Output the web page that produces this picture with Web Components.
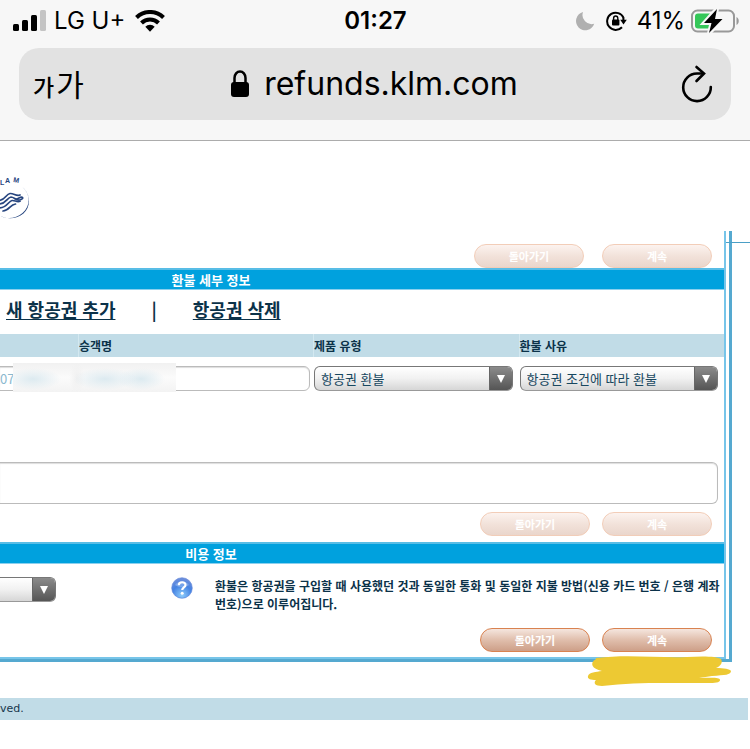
<!DOCTYPE html>
<html lang="ko">
<head>
<meta charset="utf-8">
<meta name="viewport" content="width=device-width, initial-scale=1">
<title>refunds.klm.com</title>
<style>
  body {
    margin: 0;
    background: #fff;
    color: #0b3249;
    font-family: "Noto Sans CJK KR", sans-serif;
    overflow-x: hidden;
  }
</style>
</head>
<body>
  <phone-status carrier="LG U+" time="01:27" battery="41%"></phone-status>
  <address-bar>refunds.klm.com</address-bar>
  <main>
    <site-header></site-header>
    <refund-frame>
      <button-row class="wide">
        <pill-button faded>돌아가기</pill-button>
        <pill-button faded>계속</pill-button>
      </button-row>
      <section-title>환불 세부 정보</section-title>
      <ticket-links></ticket-links>
      <ticket-table></ticket-table>
      <button-row class="middle">
        <pill-button faded>돌아가기</pill-button>
        <pill-button faded>계속</pill-button>
      </button-row>
      <section-title>비용 정보</section-title>
      <cost-info>환불은 항공권을 구입할 때 사용했던 것과 동일한 통화 및 동일한 지불 방법(신용 카드 번호 / 은행 계좌 번호)으로 이루어집니다.</cost-info>
      <button-row class="last">
        <pill-button>돌아가기</pill-button>
        <pill-button>계속</pill-button>
      </button-row>
      <marker-stroke slot="mark"></marker-stroke>
    </refund-frame>
    <site-footer>ved.</site-footer>
  </main>

<script>
class PhoneStatus extends HTMLElement {
  constructor() {
    super();
    this.attachShadow({ mode: 'open' });
  }

  connectedCallback() {
    this.shadowRoot.innerHTML = `
      <style>
        :host {
          display: grid;
          grid-template-columns: 1fr auto 1fr;
          align-items: center;
          height: 42px;
          padding: 0 11px 0 12px;
          background: #f7f7f7;
          color: #000;
          font: 24px/28px Inter, sans-serif;
        }
        div { display: flex; align-items: center; }
        .right { justify-content: flex-end; }
        .carrier { margin: 0 10px 0 8px; }
        .lock { margin: 0 10px 0 11px; }
        .battery { margin-left: 6px; }
        b { font-weight: 600; }
        svg { display: block; flex: none; }
      </style>
      <div>
        <svg width="34" height="22" viewBox="0 0 34 22">
          <rect x="1" y="14" width="6" height="7" rx="1.5"/>
          <rect x="10" y="10" width="6" height="11" rx="1.5"/>
          <rect x="19" y="5" width="6" height="16" rx="1.5"/>
          <rect x="28" width="6" height="21" rx="1.5" fill="#c4c4c4"/>
        </svg>
        <span class="carrier">${this.getAttribute('carrier')}</span>
        <svg width="30" height="22" viewBox="0 0 30 22">
          <g fill="none" stroke="#000" stroke-width="4">
            <path d="M1.5 7.5a19.2 19.2 0 0 1 27 0"/>
            <path d="M6.5 13a12 12 0 0 1 17 0"/>
          </g>
          <path d="M10.3 16.8a6.6 6.6 0 0 1 9.4 0L15 21.7z"/>
        </svg>
      </div>
      <b>${this.getAttribute('time')}</b>
      <div class="right">
        <svg width="20" height="20" viewBox="0 0 20 20">
          <path d="M8 1A9.3 9.3 0 1 0 19.2 12.8 9.2 9.2 0 0 1 8 1z" fill="#b0b0b0"/>
        </svg>
        <svg class="lock" width="21" height="20" viewBox="0 0 21 20">
          <path d="M17.600 6.800A8.600 8.600 0 1 0 16 16.200" fill="none" stroke="#000" stroke-width="2"/>
          <path d="M14.200 8.800h6.600l-3.300 4.600z"/>
          <path d="M17.400 6.500v3" stroke="#000" stroke-width="2"/>
          <rect x="6" y="8.600" width="7.400" height="6" rx="1"/>
          <path d="M7.600 9V7.200a2.100 2.200 0 0 1 4.200 0V9" fill="none" stroke="#000" stroke-width="1.400"/>
        </svg>
        <span>${this.getAttribute('battery')}</span>
        <svg class="battery" width="48" height="26" viewBox="0 0 48 26">
          <rect x="1" y="2.5" width="42" height="21" rx="5.5" fill="none" stroke="#999" stroke-width="2"/>
          <rect x="4" y="5.5" width="17" height="15" rx="3" fill="#35c759"/>
          <path d="M45.5 9c3 1.5 3 6.500 0 8z" fill="#999"/>
          <path d="M26 .5L13 15h7.500L18 25.500 31.500 11H24z" stroke="#f7f7f7" stroke-width="4"/>
          <path d="M26 1L13 15h7.500L18 25 31.500 11H24z"/>
        </svg>
      </div>
    `;
  }
}
customElements.define('phone-status', PhoneStatus);

class AddressBar extends HTMLElement {
  constructor() {
    super();
    this.attachShadow({ mode: 'open' }).innerHTML = `
      <style>
        :host {
          display: block;
          padding: 6px 19px 20px;
          background: #f7f7f7;
          border-bottom: 1px solid #acacac;
        }
        .field {
          display: grid;
          grid-template-columns: 1fr auto 1fr;
          align-items: center;
          height: 72px;
          padding: 0 16px 0 14px;
          border-radius: 20px;
          background: #e2e2e2;
        }
        button {
          padding: 0;
          border: 0;
          background: none;
          color: #000;
          font: inherit;
        }
        .size {
          display: flex;
          align-items: baseline;
          gap: 2px;
          justify-self: start;
          font-size: 30px;
          line-height: 40px;
        }
        small { font-size: 23px; font-weight: 500; }
        .host {
          display: flex;
          align-items: center;
          gap: 14px;
          font: 32px/40px Inter, sans-serif;
        }
        .reload { justify-self: end; }
        svg { display: block; }
      </style>
      <div class="field">
        <button class="size"><small>가</small><span>가</span></button>
        <button class="host">
          <svg width="20" height="28" viewBox="0 0 20 28">
            <rect x="1" y="12" width="18" height="15" rx="3"/>
            <path d="M4.500 13V8a5.500 6.500 0 0 1 11 0v5" fill="none" stroke="#000" stroke-width="2.500"/>
          </svg>
          <slot></slot>
        </button>
        <button class="reload" aria-label="새로 고침">
          <svg width="36" height="40" viewBox="0 0 36 40" fill="none" stroke="#000" stroke-width="2.600" stroke-linecap="round">
            <path d="M31.800 23A13.800 13.800 0 1 1 18 9.500H24"/>
            <path d="M17.500 3l7.500 6.500-7.500 7.500"/>
          </svg>
        </button>
      </div>
    `;
  }
}
customElements.define('address-bar', AddressBar);

class SiteHeader extends HTMLElement {
  constructor() {
    super();
    this.attachShadow({ mode: 'open' }).innerHTML = `
      <style>
        :host { display: block; height: 58px; padding-top: 32px; }
        svg { display: block; }
        text { font: bold 7px "Liberation Sans", sans-serif; fill: #27457f; }
      </style>
      <svg width="32" height="50" viewBox="0 0 32 50">
        <defs>
          <linearGradient id="ring" x1="0" y1="0" x2="1" y2="1">
            <stop offset="0" stop-color="#1e4c8f"/>
            <stop offset="1" stop-color="#28437b"/>
          </linearGradient>
        </defs>
        <text x="0" y="12">L</text>
        <text x="5" y="10">A</text>
        <text x="13" y="9" transform="rotate(10 13 9)">M</text>
        <path d="M22.500 14C31 21.500 30.500 33 22.500 40S5 45.500-2 42c9 5 19 4 25.500-1.500C31.500 33 30.500 21 22.500 14z" fill="url(#ring)"/>
        <g fill="none" stroke="#27457f" stroke-width="1.700" stroke-linecap="round">
          <path d="M-1 27.500c6 0 7-6.500 11-7 4-.3 6 3 10 1.500"/>
          <path d="M-1 31c7 0 8-6.500 12-7 3 0 5 3.500 8.500 3 3.500-.6 4-2.800 2-2.800-2.500 0-3 2.300-6.500 1.800"/>
          <path d="M0 34.800c7 0 8.500-6.800 12-7.300 3-.3 5 2 8 .7"/>
          <path d="M3 38c6 0 7-6.500 12.500-7"/>
        </g>
      </svg>
    `;
  }
}
customElements.define('site-header', SiteHeader);

class RefundFrame extends HTMLElement {
  constructor() {
    super();
    this.attachShadow({ mode: 'open' }).innerHTML = `
      <style>
        :host {
          display: block;
          position: relative;
          margin-right: 18px;
          padding-right: 3px;
          border-right: 3px solid #55a9d0;
          border-bottom: 3px solid #55a9d0;
        }
        .inner {
          border-right: 2px solid #77c5e9;
          border-bottom: 2px solid #77c5e9;
        }
        /* rule that runs on to the window's edge */
        .rule {
          position: absolute;
          top: 11px;
          left: calc(100% - 3px);
          width: 24px;
          border-top: 1px solid #4b9fc6;
        }
        ::slotted([slot="mark"]) {
          position: absolute;
          right: 0;
          top: 100%;
        }
      </style>
      <div class="inner"><slot></slot></div>
      <div class="rule"></div>
      <slot name="mark"></slot>
    `;
  }
}
customElements.define('refund-frame', RefundFrame);

class SectionTitle extends HTMLElement {
  constructor() {
    super();
    this.attachShadow({ mode: 'open' }).innerHTML = `
      <style>
        :host {
          display: block;
          padding-right: 302px;
          border-top: 2px solid #58bde6;
          border-bottom: 1px solid #8bd0ee;
          background: #00a1de;
          color: #fff;
          text-align: center;
        }
        h2 { margin: 0; font-size: 13px; line-height: 19px; }
      </style>
      <h2><slot></slot></h2>
    `;
  }
}
customElements.define('section-title', SectionTitle);

class ButtonRow extends HTMLElement {
  constructor() {
    super();
    this.attachShadow({ mode: 'open' }).innerHTML = `
      <style>
        :host {
          display: flex;
          justify-content: flex-end;
          gap: 12px;
          padding-right: 12px;
        }
        :host(.wide) { gap: 18px; padding-top: 13px; }
        :host(.middle) { padding-top: 8px; padding-bottom: 6px; }
        :host(.last) { padding-top: 15px; padding-bottom: 5px; }
      </style>
      <slot></slot>
    `;
  }
}
customElements.define('button-row', ButtonRow);

class PillButton extends HTMLElement {
  constructor() {
    super();
    this.attachShadow({ mode: 'open' }).innerHTML = `
      <style>
        :host { display: block; }
        button {
          display: block;
          width: 110px;
          height: 24px;
          padding: 0;
          border: 1px solid #d98250;
          border-radius: 12px;
          background: linear-gradient(#f5e6de, #e0beac 50%, #cd9f88);
          color: #fff;
          font: bold 11px/20px "Noto Sans CJK KR", sans-serif;
        }
        :host([faded]) button {
          border-color: #f2cdb8;
          background: linear-gradient(#fcf3ef, #f2e2da 50%, #ead6cc);
        }
      </style>
      <button><slot></slot></button>
    `;
  }
}
customElements.define('pill-button', PillButton);

class TicketLinks extends HTMLElement {
  constructor() {
    super();
    this.attachShadow({ mode: 'open' }).innerHTML = `
      <style>
        :host {
          display: flex;
          gap: 36px;
          padding: 7px 6px 13px;
          font-size: 18px;
          font-weight: bold;
          line-height: 24px;
        }
        a { color: #0b3249; text-underline-offset: 2px; text-decoration-thickness: 1px; }
      </style>
      <a href="#">새 항공권 추가</a>
      <span>|</span>
      <a href="#">항공권 삭제</a>
    `;
  }
}
customElements.define('ticket-links', TicketLinks);

class GlossySelect extends HTMLElement {
  constructor() {
    super();
    this.attachShadow({ mode: 'open' });
  }

  connectedCallback() {
    this.shadowRoot.innerHTML = `
      <style>
        :host { display: block; }
        label {
          display: grid;
          grid-template-columns: 1fr 23px;
          height: 25px;
          box-sizing: border-box;
          border: 1px solid #777;
          border-bottom-color: #999;
          border-radius: 6px;
          overflow: hidden;
          background: linear-gradient(#fff, #f1f1f1 50%, #d6d6d6);
        }
        select {
          grid-area: 1 / 1 / 2 / 3;
          appearance: none;
          border: 0;
          padding: 0 24px 0 6px;
          width: 100%;
          background: none;
          color: #17475f;
          font: 13px/22px "Noto Sans CJK KR", sans-serif;
        }
        span {
          grid-area: 1 / 2;
          display: grid;
          place-items: center;
          border-left: 1px solid #666;
          background: linear-gradient(#8b8b8b, #555);
          pointer-events: none;
        }
      </style>
      <label>
        <select aria-label="${this.getAttribute('label')}">
          <option>${this.getAttribute('value')}</option>
        </select>
        <span><svg width="8" height="8"><path d="M0 0h8L4 8z" fill="#fff"/></svg></span>
      </label>
    `;
  }
}
customElements.define('glossy-select', GlossySelect);

class TicketTable extends HTMLElement {
  constructor() {
    super();
    this.attachShadow({ mode: 'open' }).innerHTML = `
      <style>
        :host { display: block; position: relative; }
        table {
          width: 100%;
          table-layout: fixed;
          border-collapse: collapse;
        }
        col.number { width: 78px; }
        col.name { width: 235px; }
        th {
          height: 23px;
          padding: 0 1px;
          background: #c1dce7;
          font-size: 12px;
          line-height: 22px;
          text-align: left;
          box-shadow: inset 1px 0 #d3e8f0;
        }
        th:first-child { box-shadow: none; }
        td { padding: 9px 6px 71px 1px; }
        td:nth-child(-n+2) { padding-left: 0; padding-right: 3px; }
        input, textarea {
          display: block;
          box-sizing: border-box;
          width: 100%;
          border: 1px solid #bbb;
          border-radius: 6px;
          background: #fff;
          box-shadow: inset 0 1px 1px #ddd;
          color: #8ab9cf;
          font: 13px/20px "Noto Sans CJK KR", sans-serif;
        }
        input { height: 25px; padding: 0; }
        .open, textarea {
          border-left: 0;
          border-top-left-radius: 0;
          border-bottom-left-radius: 0;
        }
        textarea { height: 42px; resize: none; }
        .notes { padding-right: 6px; }
        /* smudge over the passenger's details */
        .smudge {
          position: absolute;
          top: 29px;
          left: 13px;
          width: 163px;
          height: 29px;
          background:
            radial-gradient(ellipse 28px 11px at 20px 16px, #dceaf0, #dceaf000),
            radial-gradient(ellipse 32px 11px at 92px 16px, #dceaf0, #dceaf000),
            radial-gradient(ellipse 24px 11px at 128px 16px, #dceaf0, #dceaf000),
            radial-gradient(ellipse 8px 16px at 64px 15px, #f0f0f0, #f0f0f000),
            linear-gradient(#f1f1f1, #fbfbfb 50%, #f3f3f3);
        }
      </style>
      <table>
        <colgroup><col class="number"><col class="name"><col><col></colgroup>
        <thead>
          <tr><th scope="col" aria-label="항공권 번호"></th><th scope="col">승객명</th><th scope="col">제품 유형</th><th scope="col">환불 사유</th></tr>
        </thead>
        <tbody>
          <tr>
            <td><input class="open" aria-label="항공권 번호" value="07"></td>
            <td><input aria-label="승객명"></td>
            <td><glossy-select label="제품 유형" value="항공권 환불"></glossy-select></td>
            <td><glossy-select label="환불 사유" value="항공권 조건에 따라 환불"></glossy-select></td>
          </tr>
        </tbody>
      </table>
      <div class="notes"><textarea aria-label="비고"></textarea></div>
      <div class="smudge"></div>
    `;
  }
}
customElements.define('ticket-table', TicketTable);

class CostInfo extends HTMLElement {
  constructor() {
    super();
    this.attachShadow({ mode: 'open' }).innerHTML = `
      <style>
        :host {
          display: grid;
          grid-template-columns: 56px 22px 1fr;
          column-gap: 0;
          align-items: start;
          padding-top: 13px;
        }
        .currency { overflow: hidden; display: flex; justify-content: flex-end; }
        glossy-select { flex: none; width: 80px; }
        .help { display: block; margin-left: 115px; }
        p {
          margin: 0 0 0 137px;
          font-size: 12px;
          font-weight: bold;
          line-height: 18px;
          word-break: keep-all;
        }
      </style>
      <div class="currency"><glossy-select label="통화" value=""></glossy-select></div>
      <svg class="help" width="22" height="22" viewBox="0 0 22 22">
        <defs>
          <radialGradient id="ball" cx=".5" cy=".85" r=".8">
            <stop offset="0" stop-color="#8ccbfa"/>
            <stop offset=".6" stop-color="#4583e3"/>
            <stop offset="1" stop-color="#6d8edb"/>
          </radialGradient>
        </defs>
        <circle cx="11" cy="11" r="10.300" fill="url(#ball)" stroke="#5d83d8" stroke-width=".6"/>
        <path d="M4 8a8 7 0 0 1 14 0c-4 3-10 3-14 0z" fill="#fff" opacity=".25"/>
        <path d="M7.800 8.300c0-4 6.700-4 6.700-.3 0 2.400-3.300 2.500-3.300 5" fill="none" stroke="#fff" stroke-width="2.200"/>
        <circle cx="11.200" cy="16.200" r="1.500" fill="#fff"/>
      </svg>
      <p><slot></slot></p>
    `;
  }
}
customElements.define('cost-info', CostInfo);

class MarkerStroke extends HTMLElement {
  constructor() {
    super();
    this.attachShadow({ mode: 'open' }).innerHTML = `
      <style>
        :host { display: block; }
        svg { display: block; overflow: visible; }
      </style>
      <svg width="142" height="26" viewBox="0 0 142 26">
        <path d="M9-1C40-5 70-1 100-2c14-1 30-1 34 2 2 3 0 7-5 9 8 0 14 1 15 3 0 4-6 4-19 5l-13 2c11 0 21-1 21 2 0 4-11 3-26 3-30 0-60-1-92 3-7 0-9-3-6-6-5 0-9-1-8-4 1-4 8-4 14-5-10-2-13-8-6-12z" fill="#edc933"/>
      </svg>
    `;
  }
}
customElements.define('marker-stroke', MarkerStroke);

class SiteFooter extends HTMLElement {
  constructor() {
    super();
    this.attachShadow({ mode: 'open' }).innerHTML = `
      <style>
        :host {
          display: block;
          margin: 36px 2px 0 0;
          background: #c1dce7;
          color: #17384c;
          font: 11px/22px "DejaVu Sans", sans-serif;
        }
      </style>
      <slot></slot>
    `;
  }
}
customElements.define('site-footer', SiteFooter);
</script>
</body>
</html>
